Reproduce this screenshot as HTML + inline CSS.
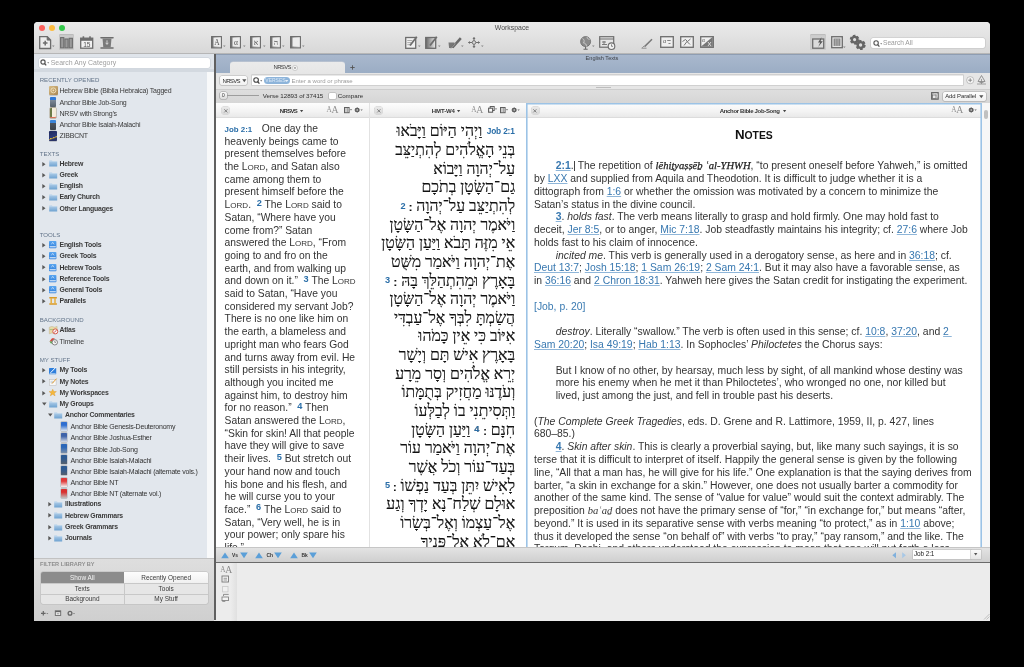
<!DOCTYPE html>
<html><head><meta charset="utf-8">
<style>
*{margin:0;padding:0;box-sizing:border-box}
html,body{width:1024px;height:667px;background:#000;overflow:hidden;font-family:"Liberation Sans",sans-serif;position:relative}
body{will-change:transform}
.a{position:absolute}
.t{position:absolute;white-space:nowrap;line-height:1}
svg{position:absolute;overflow:visible}
</style></head><body>

<div class="a" style="left:34.00px;top:22.00px;width:956.00px;height:598.50px;background:#ececec;border-radius:4px 4px 0 0"></div>
<div class="a" style="left:34.00px;top:22.00px;width:956.00px;height:32.00px;background:linear-gradient(#ebebeb,#d8d8d8);border-radius:4px 4px 0 0;border-bottom:1px solid #b6b6b6"></div>
<div class="a" style="left:38.50px;top:24.70px;width:6.40px;height:6.40px;background:#fc605b;border-radius:50%"></div>
<div class="a" style="left:48.50px;top:24.70px;width:6.40px;height:6.40px;background:#fdbc40;border-radius:50%"></div>
<div class="a" style="left:58.80px;top:24.70px;width:6.40px;height:6.40px;background:#34c84a;border-radius:50%"></div>
<div class="t" style="left:212.00px;width:600px;text-align:center;top:25.26px;font-size:6.9px;color:#4b4b4b;font-weight:normal;">Workspace</div>
<svg style="left:39.00px;top:35.80px" width="13" height="14" viewBox="0 0 13 14"><path d="M0.7 0.7h7.6l3.3 3.3v8.5H0.7z" fill="#ececec" stroke="#6d6d6d" stroke-width="1.3"/><path d="M8.2 0.7v3.4h3.4" fill="#6d6d6d" stroke="#6d6d6d" stroke-width="1"/><path d="M6.2 4.8v4.6M3.9 7.1h4.6" stroke="#6d6d6d" stroke-width="1.5"/></svg>
<svg style="left:51.60px;top:44.80px" width="3" height="3" viewBox="0 0 3 3"><path d="M0 0.4h2.6L1.3 2z" fill="#888"/></svg>
<div class="a" style="left:58.70px;top:34.30px;width:15.60px;height:15.30px;background:#cacaca;border-radius:1.5px;box-shadow:inset 0 0.6px 1px rgba(0,0,0,0.15)"></div>
<svg style="left:60.30px;top:37.20px" width="13" height="11.5" viewBox="0 0 13 11.5"><rect x="0.6" y="0.6" width="3.2" height="10.3" fill="#9a9a9a" stroke="#6d6d6d" stroke-width="1.1"/><rect x="4.9" y="2" width="3.2" height="8.9" fill="#9a9a9a" stroke="#6d6d6d" stroke-width="1.1"/><rect x="9.2" y="1.3" width="3.2" height="9.6" fill="#9a9a9a" stroke="#6d6d6d" stroke-width="1.1"/></svg>
<svg style="left:79.80px;top:36.20px" width="14" height="13" viewBox="0 0 14 13"><rect x="0.7" y="2.2" width="12" height="10" fill="#f2f2f2" stroke="#6d6d6d" stroke-width="1.3"/><rect x="0.7" y="2.2" width="12" height="2.6" fill="#6d6d6d"/><rect x="2.6" y="0.3" width="1.6" height="2.6" fill="#6d6d6d"/><rect x="9.2" y="0.3" width="1.6" height="2.6" fill="#6d6d6d"/><text x="6.8" y="11" font-family="Liberation Sans" font-size="6.6" text-anchor="middle" fill="#555">15</text></svg>
<svg style="left:98.50px;top:37.00px" width="16" height="12" viewBox="0 0 16 12"><path d="M2 0.8h12M2 11h12" stroke="#6d6d6d" stroke-width="1.6" stroke-linecap="round"/><path d="M3.5 1.5h9l-0.8 8.8h-7.4z" fill="#7a7a7a"/><path d="M8 3.3v4M6.6 5.8L8 7.3L9.4 5.8" stroke="#ddd" stroke-width="0.9" fill="none"/></svg>
<svg style="left:210.70px;top:36.10px" width="11" height="12.5" viewBox="0 0 11 12.5"><defs><linearGradient id="gb210" x1="0" x2="1"><stop offset="0" stop-color="#5f5f5f"/><stop offset="0.35" stop-color="#b9b9b9"/><stop offset="1" stop-color="#ededed"/></linearGradient></defs><rect x="0.6" y="0.6" width="9.8" height="11.3" fill="url(#gb210)" stroke="#6a6a6a" stroke-width="1.1"/><rect x="2.6" y="1.8" width="6.8" height="8.5" fill="#ececec"/><text x="6" y="9" font-family="Liberation Serif" font-size="7.5" text-anchor="middle" fill="#555">A</text></svg>
<svg style="left:223.10px;top:45.00px" width="3" height="3" viewBox="0 0 3 3"><path d="M0 0.4h2.6L1.3 2z" fill="#888"/></svg>
<svg style="left:230.40px;top:36.10px" width="11" height="12.5" viewBox="0 0 11 12.5"><defs><linearGradient id="gb230" x1="0" x2="1"><stop offset="0" stop-color="#5f5f5f"/><stop offset="0.35" stop-color="#b9b9b9"/><stop offset="1" stop-color="#ededed"/></linearGradient></defs><rect x="0.6" y="0.6" width="9.8" height="11.3" fill="url(#gb230)" stroke="#6a6a6a" stroke-width="1.1"/><rect x="2.6" y="1.8" width="6.8" height="8.5" fill="#ececec"/><text x="6" y="9" font-family="Liberation Serif" font-size="7.5" text-anchor="middle" fill="#555">α</text></svg>
<svg style="left:242.80px;top:45.00px" width="3" height="3" viewBox="0 0 3 3"><path d="M0 0.4h2.6L1.3 2z" fill="#888"/></svg>
<svg style="left:250.30px;top:36.10px" width="11" height="12.5" viewBox="0 0 11 12.5"><defs><linearGradient id="gb250" x1="0" x2="1"><stop offset="0" stop-color="#5f5f5f"/><stop offset="0.35" stop-color="#b9b9b9"/><stop offset="1" stop-color="#ededed"/></linearGradient></defs><rect x="0.6" y="0.6" width="9.8" height="11.3" fill="url(#gb250)" stroke="#6a6a6a" stroke-width="1.1"/><rect x="2.6" y="1.8" width="6.8" height="8.5" fill="#ececec"/><text x="6" y="9" font-family="Liberation Serif" font-size="7.5" text-anchor="middle" fill="#555">א</text></svg>
<svg style="left:262.70px;top:45.00px" width="3" height="3" viewBox="0 0 3 3"><path d="M0 0.4h2.6L1.3 2z" fill="#888"/></svg>
<svg style="left:270.00px;top:36.10px" width="11" height="12.5" viewBox="0 0 11 12.5"><defs><linearGradient id="gb270" x1="0" x2="1"><stop offset="0" stop-color="#5f5f5f"/><stop offset="0.35" stop-color="#b9b9b9"/><stop offset="1" stop-color="#ededed"/></linearGradient></defs><rect x="0.6" y="0.6" width="9.8" height="11.3" fill="url(#gb270)" stroke="#6a6a6a" stroke-width="1.1"/><rect x="2.6" y="1.8" width="6.8" height="8.5" fill="#ececec"/><text x="6" y="9" font-family="Liberation Serif" font-size="7.5" text-anchor="middle" fill="#555">ה</text></svg>
<svg style="left:282.40px;top:45.00px" width="3" height="3" viewBox="0 0 3 3"><path d="M0 0.4h2.6L1.3 2z" fill="#888"/></svg>
<svg style="left:290.00px;top:36.10px" width="11" height="12.5" viewBox="0 0 11 12.5"><defs><linearGradient id="gb290" x1="0" x2="1"><stop offset="0" stop-color="#5f5f5f"/><stop offset="0.35" stop-color="#b9b9b9"/><stop offset="1" stop-color="#ededed"/></linearGradient></defs><rect x="0.6" y="0.6" width="9.8" height="11.3" fill="url(#gb290)" stroke="#6a6a6a" stroke-width="1.1"/><rect x="2.6" y="1.8" width="6.8" height="8.5" fill="#ececec"/></svg>
<svg style="left:302.40px;top:45.00px" width="3" height="3" viewBox="0 0 3 3"><path d="M0 0.4h2.6L1.3 2z" fill="#888"/></svg>
<svg style="left:404.80px;top:36.00px" width="13" height="13" viewBox="0 0 13 13"><rect x="0.7" y="1.5" width="10" height="10.8" fill="#f0f0f0" stroke="#6d6d6d" stroke-width="1.3"/><path d="M2.3 4.5h5M2.3 6.6h4M2.3 8.7h4" stroke="#999" stroke-width="0.8"/><path d="M5 9.5L11.8 0.8" stroke="#6d6d6d" stroke-width="1.8"/></svg>
<svg style="left:418.20px;top:45.00px" width="3" height="3" viewBox="0 0 3 3"><path d="M0 0.4h2.6L1.3 2z" fill="#888"/></svg>
<svg style="left:425.00px;top:36.00px" width="13" height="13" viewBox="0 0 13 13"><defs><linearGradient id="g3" x1="0" x2="1"><stop offset="0" stop-color="#666"/><stop offset="1" stop-color="#efefef"/></linearGradient></defs><rect x="0.7" y="1.5" width="10" height="10.8" fill="url(#g3)" stroke="#6d6d6d" stroke-width="1.3"/><path d="M5 9.5L11.8 0.8" stroke="#6d6d6d" stroke-width="1.8"/></svg>
<svg style="left:438.00px;top:45.00px" width="3" height="3" viewBox="0 0 3 3"><path d="M0 0.4h2.6L1.3 2z" fill="#888"/></svg>
<svg style="left:447.90px;top:36.50px" width="14" height="12.5" viewBox="0 0 14 12.5"><path d="M0.5 5.5h6l-0.8 5.5h-4.6z" fill="#777"/><path d="M4.5 10.5L12.8 1.2" stroke="#6a6a6a" stroke-width="2.6"/><path d="M3 11.5L7.5 6.5" stroke="#999" stroke-width="1"/></svg>
<svg style="left:461.20px;top:45.00px" width="3" height="3" viewBox="0 0 3 3"><path d="M0 0.4h2.6L1.3 2z" fill="#888"/></svg>
<svg style="left:468.00px;top:36.80px" width="12" height="11" viewBox="0 0 12 11"><path d="M6 0.3v10.4M0.3 5.5h11.4" stroke="#6d6d6d" stroke-width="1.1"/><path d="M6 0.2L4.4 2h3.2zM6 10.8L4.4 9h3.2zM0.2 5.5L2 3.9v3.2zM11.8 5.5L10 3.9v3.2z" fill="#6d6d6d"/><circle cx="6" cy="5.5" r="1.8" fill="#d8d8d8" stroke="#6d6d6d" stroke-width="0.9"/></svg>
<svg style="left:481.00px;top:45.00px" width="3" height="3" viewBox="0 0 3 3"><path d="M0 0.4h2.6L1.3 2z" fill="#888"/></svg>
<svg style="left:580.00px;top:35.50px" width="12" height="14" viewBox="0 0 12 14"><circle cx="5.6" cy="5.6" r="5" fill="#8a8a8a" stroke="#6a6a6a" stroke-width="0.8"/><path d="M2.5 2.5c2 1 2 3 1 4.5c2 0 3 1.5 3 3.5M7 1c0 2 2 2.5 3.5 2" stroke="#c9c9c9" stroke-width="1" fill="none"/><path d="M5.6 10.6v2.5M3.5 13.2h4.2" stroke="#6a6a6a" stroke-width="1.1"/></svg>
<svg style="left:592.40px;top:45.00px" width="3" height="3" viewBox="0 0 3 3"><path d="M0 0.4h2.6L1.3 2z" fill="#888"/></svg>
<svg style="left:599.00px;top:36.00px" width="17" height="14" viewBox="0 0 17 14"><rect x="0.7" y="0.7" width="14" height="10.5" fill="#e6e6e6" stroke="#6d6d6d" stroke-width="1.2"/><path d="M0.7 3h14" stroke="#6d6d6d" stroke-width="1"/><path d="M3 6h4M5 5v3M3 8.5h5" stroke="#6d6d6d" stroke-width="0.9"/><circle cx="12.5" cy="10.2" r="3.3" fill="#f2f2f2" stroke="#6d6d6d" stroke-width="1.1"/><path d="M12.5 8.3v2h1.5" stroke="#6d6d6d" stroke-width="0.8" fill="none"/></svg>
<svg style="left:640.90px;top:38.00px" width="12" height="10.5" viewBox="0 0 12 10.5"><path d="M3 8L10.5 0.8l1 1L4 9.2z" fill="#777"/><path d="M3 8l-1.8 1.8M0.5 10.2h5" stroke="#888" stroke-width="0.9"/></svg>
<svg style="left:659.70px;top:36.20px" width="14.5" height="12.2" viewBox="0 0 14.5 12.2"><rect x="0.7" y="0.7" width="12.6" height="10.6" fill="#efefef" stroke="#6d6d6d" stroke-width="1.3"/><text x="3" y="6.8" font-family="Liberation Serif" font-size="6" fill="#555">α</text><path d="M7.2 4.5h3.5M8.5 7.5h2" stroke="#777" stroke-width="0.9"/></svg>
<svg style="left:679.80px;top:36.20px" width="14.5" height="12.2" viewBox="0 0 14.5 12.2"><rect x="0.7" y="0.7" width="12.6" height="10.6" fill="#efefef" stroke="#6d6d6d" stroke-width="1.3"/><path d="M2.5 5.5l3 -2l2 2l3 -2.5M4 9.5l3-4l3 3" stroke="#666" stroke-width="0.9" fill="none"/></svg>
<svg style="left:699.60px;top:36.20px" width="14.5" height="12.2" viewBox="0 0 14.5 12.2"><rect x="0.7" y="0.7" width="12.6" height="10.6" fill="#efefef" stroke="#6d6d6d" stroke-width="1.3"/><path d="M0.8 10.8L12.8 0.8V10.8z" fill="#777"/><text x="2" y="6" font-family="Liberation Serif" font-size="5.5" fill="#555">α</text><path d="M8 6l3 4M11 6l-3 4" stroke="#e5e5e5" stroke-width="0.9"/></svg>
<div class="a" style="left:810.10px;top:34.40px;width:15.70px;height:15.40px;background:#cdcdcd;border-radius:1.5px;box-shadow:inset 0 0.6px 1px rgba(0,0,0,0.15)"></div>
<svg style="left:811.80px;top:36.70px" width="13" height="12" viewBox="0 0 13 12"><rect x="0.7" y="2" width="11" height="9.2" fill="#dadada" stroke="#6d6d6d" stroke-width="1.3"/><path d="M9.5 0.3L6 5.5h2.2L6.2 10L10.8 4.3H8.6z" fill="#555"/></svg>
<svg style="left:830.60px;top:36.40px" width="12" height="12.5" viewBox="0 0 12 12.5"><rect x="0.7" y="0.7" width="10.6" height="11" fill="#e3e3e3" stroke="#6d6d6d" stroke-width="1.3"/><rect x="2.6" y="2.5" width="6.8" height="7.4" fill="#8a8a8a"/><path d="M4.8 2.5v7.4M7.1 2.5v7.4" stroke="#c5c5c5" stroke-width="0.7"/></svg>
<svg style="left:843.00px;top:45.50px" width="3" height="3" viewBox="0 0 3 3"><path d="M0 0.4h2.6L1.3 2z" fill="#888"/></svg>
<svg style="left:849.80px;top:35.00px" width="16" height="15" viewBox="0 0 16 15"><circle cx="4.6" cy="4.6" r="3.8" fill="none" stroke="#666" stroke-width="2.09" stroke-dasharray="2.36 1.60"/><circle cx="4.6" cy="4.6" r="2.74" fill="none" stroke="#666" stroke-width="2.28"/><circle cx="10.6" cy="10" r="4.0" fill="none" stroke="#666" stroke-width="2.20" stroke-dasharray="2.48 1.68"/><circle cx="10.6" cy="10" r="2.88" fill="none" stroke="#666" stroke-width="2.40"/></svg>
<div class="a" style="left:870.60px;top:37.90px;width:114.20px;height:10.20px;background:#fff;border-radius:2px;box-shadow:0 0 0 0.6px #c3c3c3"></div>
<svg style="left:872.50px;top:39.50px" width="10" height="8" viewBox="0 0 10 8"><circle cx="3.1" cy="3" r="2.2" fill="none" stroke="#555" stroke-width="1.1"/><line x1="4.7" y1="4.6" x2="6.4" y2="6.6" stroke="#555" stroke-width="1.3"/><path d="M7.2 3.3h2l-1 1.1z" fill="#666"/></svg>
<div class="t" style="left:883.00px;top:40.10px;font-size:6.6px;color:#9a9a9a;font-weight:normal;">Search All</div>
<div class="a" style="left:34.00px;top:54.00px;width:181.00px;height:504.00px;background:#e2e7ed"></div>
<div class="a" style="left:34.00px;top:54.00px;width:181.00px;height:17.50px;background:#dfe4ea;border-bottom:3px solid #d3d9e0"></div>
<div class="a" style="left:38.50px;top:57.60px;width:171.50px;height:10.40px;background:#fff;border-radius:2px;box-shadow:0 0 0 0.5px #c6ccd3"></div>
<svg style="left:40px;top:59px" width="10" height="8"><circle cx="3" cy="3" r="2.1" fill="none" stroke="#555" stroke-width="1.2"/><line x1="4.5" y1="4.5" x2="6.2" y2="6.4" stroke="#555" stroke-width="1.3"/><path d="M7.2 3.3h2l-1 1.1z" fill="#666"/></svg>
<div class="t" style="left:50.70px;top:59.84px;font-size:6.95px;color:#a0a0a0;font-weight:normal;">Search Any Category</div>
<div class="a" style="left:206.70px;top:71.50px;width:7.50px;height:486.50px;background:#f8f9fa"></div>
<div class="a" style="left:214.20px;top:54.00px;width:1.80px;height:566.00px;background:#606060"></div>
<div class="t" style="left:39.70px;top:76.92px;font-size:6.1px;color:#627489;font-weight:normal;letter-spacing:0.02px">RECENTLY OPENED</div>
<div class="a" style="left:48.80px;top:86.10px;width:8.80px;height:9.40px;background:linear-gradient(135deg,#d8bd86,#a98652);border-radius:1px;box-shadow:0 0.5px 0.5px rgba(0,0,0,0.3)"></div>
<svg style="left:49.8px;top:87.4px" width="7" height="7"><circle cx="3.4" cy="3.4" r="2.5" fill="none" stroke="#f0e2bf" stroke-width="0.9"/><circle cx="3.4" cy="3.4" r="0.9" fill="#efe0bb"/></svg>
<div class="t" style="left:59.50px;top:87.22px;font-size:7.0px;color:#3a3a3a;font-weight:normal;letter-spacing:-0.22px">Hebrew Bible (Biblia Hebraica) Tagged</div>
<div class="a" style="left:49.70px;top:97.00px;width:6.70px;height:9.80px;background:linear-gradient(#2f78d6 0,#2f78d6 30%,#7d8a99 30%,#56606b);border-radius:0.8px;box-shadow:0 0.5px 0.5px rgba(0,0,0,0.3)"></div>
<div class="t" style="left:59.50px;top:98.52px;font-size:7.0px;color:#3a3a3a;font-weight:normal;letter-spacing:-0.22px">Anchor Bible Job-Song</div>
<div class="a" style="left:49.70px;top:108.30px;width:6.70px;height:10.00px;background:linear-gradient(90deg,#6b7a46 0,#6b7a46 25%,#f6f0e2 25%,#f3ead6);border-radius:0.8px;box-shadow:0 0 0 0.4px #9a8a6a, 0 -1px 0 #d9735a inset"></div>
<div class="t" style="left:59.50px;top:109.72px;font-size:7.0px;color:#3a3a3a;font-weight:normal;letter-spacing:-0.22px">NRSV with Strong’s</div>
<div class="a" style="left:49.70px;top:119.70px;width:6.70px;height:10.00px;background:linear-gradient(#3a84d8 0,#3a84d8 28%,#4d5560 28%,#39414b);border-radius:0.8px;box-shadow:0 0.5px 0.5px rgba(0,0,0,0.3)"></div>
<div class="t" style="left:59.50px;top:120.92px;font-size:7.0px;color:#3a3a3a;font-weight:normal;letter-spacing:-0.22px">Anchor Bible Isaiah-Malachi</div>
<div class="a" style="left:49.30px;top:131.00px;width:7.70px;height:9.60px;background:linear-gradient(160deg,#1f2a5e,#2c3a7a 60%,#d9b43a 62%,#2a3468 75%);border-radius:0.8px;box-shadow:0 0.5px 0.5px rgba(0,0,0,0.3)"></div>
<div class="t" style="left:59.50px;top:132.12px;font-size:7.0px;color:#3a3a3a;font-weight:normal;letter-spacing:-0.22px">ZIBBCNT</div>
<div class="t" style="left:39.70px;top:150.82px;font-size:6.1px;color:#627489;font-weight:normal;letter-spacing:0.02px">TEXTS</div>
<svg style="left:42.4px;top:161.5px" width="4" height="5"><path d="M0.3 0V4.6L3.5 2.3z" fill="#585858"/></svg>
<svg style="left:48.8px;top:160.4px" width="9" height="7"><defs><linearGradient id="fg" x1="0" y1="0" x2="0" y2="1"><stop offset="0" stop-color="#b3d0ea"/><stop offset="1" stop-color="#6fa3d1"/></linearGradient></defs><path d="M0.2 0.6h2.8l0.6 0.6h4.6v5.2h-8z" fill="url(#fg)"/><path d="M0.2 1.6h8" stroke="#c9def1" stroke-width="0.5"/></svg>
<div class="t" style="left:59.50px;top:160.76px;font-size:6.9px;color:#3a3a3a;font-weight:bold;letter-spacing:-0.22px">Hebrew</div>
<svg style="left:42.4px;top:172.7px" width="4" height="5"><path d="M0.3 0V4.6L3.5 2.3z" fill="#585858"/></svg>
<svg style="left:48.8px;top:171.6px" width="9" height="7"><defs><linearGradient id="fg" x1="0" y1="0" x2="0" y2="1"><stop offset="0" stop-color="#b3d0ea"/><stop offset="1" stop-color="#6fa3d1"/></linearGradient></defs><path d="M0.2 0.6h2.8l0.6 0.6h4.6v5.2h-8z" fill="url(#fg)"/><path d="M0.2 1.6h8" stroke="#c9def1" stroke-width="0.5"/></svg>
<div class="t" style="left:59.50px;top:171.96px;font-size:6.9px;color:#3a3a3a;font-weight:bold;letter-spacing:-0.22px">Greek</div>
<svg style="left:42.4px;top:183.9px" width="4" height="5"><path d="M0.3 0V4.6L3.5 2.3z" fill="#585858"/></svg>
<svg style="left:48.8px;top:182.8px" width="9" height="7"><defs><linearGradient id="fg" x1="0" y1="0" x2="0" y2="1"><stop offset="0" stop-color="#b3d0ea"/><stop offset="1" stop-color="#6fa3d1"/></linearGradient></defs><path d="M0.2 0.6h2.8l0.6 0.6h4.6v5.2h-8z" fill="url(#fg)"/><path d="M0.2 1.6h8" stroke="#c9def1" stroke-width="0.5"/></svg>
<div class="t" style="left:59.50px;top:183.16px;font-size:6.9px;color:#3a3a3a;font-weight:bold;letter-spacing:-0.22px">English</div>
<svg style="left:42.4px;top:195.1px" width="4" height="5"><path d="M0.3 0V4.6L3.5 2.3z" fill="#585858"/></svg>
<svg style="left:48.8px;top:194.0px" width="9" height="7"><defs><linearGradient id="fg" x1="0" y1="0" x2="0" y2="1"><stop offset="0" stop-color="#b3d0ea"/><stop offset="1" stop-color="#6fa3d1"/></linearGradient></defs><path d="M0.2 0.6h2.8l0.6 0.6h4.6v5.2h-8z" fill="url(#fg)"/><path d="M0.2 1.6h8" stroke="#c9def1" stroke-width="0.5"/></svg>
<div class="t" style="left:59.50px;top:194.36px;font-size:6.9px;color:#3a3a3a;font-weight:bold;letter-spacing:-0.22px">Early Church</div>
<svg style="left:42.4px;top:206.3px" width="4" height="5"><path d="M0.3 0V4.6L3.5 2.3z" fill="#585858"/></svg>
<svg style="left:48.8px;top:205.2px" width="9" height="7"><defs><linearGradient id="fg" x1="0" y1="0" x2="0" y2="1"><stop offset="0" stop-color="#b3d0ea"/><stop offset="1" stop-color="#6fa3d1"/></linearGradient></defs><path d="M0.2 0.6h2.8l0.6 0.6h4.6v5.2h-8z" fill="url(#fg)"/><path d="M0.2 1.6h8" stroke="#c9def1" stroke-width="0.5"/></svg>
<div class="t" style="left:59.50px;top:205.56px;font-size:6.9px;color:#3a3a3a;font-weight:bold;letter-spacing:-0.22px">Other Languages</div>
<div class="t" style="left:39.70px;top:231.82px;font-size:6.1px;color:#627489;font-weight:normal;letter-spacing:0.02px">TOOLS</div>
<svg style="left:42.4px;top:242.9px" width="4" height="5"><path d="M0.3 0V4.6L3.5 2.3z" fill="#585858"/></svg>
<svg style="left:49.2px;top:241.2px" width="8" height="8"><defs><linearGradient id="tg" x1="0" y1="0" x2="0" y2="1"><stop offset="0" stop-color="#5aa6f0"/><stop offset="1" stop-color="#2f7fdc"/></linearGradient></defs><rect x="0" y="0" width="7.4" height="7.3" rx="0.8" fill="url(#tg)"/><rect x="0.6" y="5.3" width="6.2" height="1" fill="#f4f8fc"/><path d="M2.3 3.4L3.7 1.3L5.1 3.4" stroke="#e8f2fc" stroke-width="0.6" fill="none"/></svg>
<div class="t" style="left:59.50px;top:242.16px;font-size:6.9px;color:#3a3a3a;font-weight:bold;letter-spacing:-0.22px">English Tools</div>
<svg style="left:42.4px;top:254.1px" width="4" height="5"><path d="M0.3 0V4.6L3.5 2.3z" fill="#585858"/></svg>
<svg style="left:49.2px;top:252.4px" width="8" height="8"><defs><linearGradient id="tg" x1="0" y1="0" x2="0" y2="1"><stop offset="0" stop-color="#5aa6f0"/><stop offset="1" stop-color="#2f7fdc"/></linearGradient></defs><rect x="0" y="0" width="7.4" height="7.3" rx="0.8" fill="url(#tg)"/><rect x="0.6" y="5.3" width="6.2" height="1" fill="#f4f8fc"/><path d="M2.3 3.4L3.7 1.3L5.1 3.4" stroke="#e8f2fc" stroke-width="0.6" fill="none"/></svg>
<div class="t" style="left:59.50px;top:253.36px;font-size:6.9px;color:#3a3a3a;font-weight:bold;letter-spacing:-0.22px">Greek Tools</div>
<svg style="left:42.4px;top:265.3px" width="4" height="5"><path d="M0.3 0V4.6L3.5 2.3z" fill="#585858"/></svg>
<svg style="left:49.2px;top:263.6px" width="8" height="8"><defs><linearGradient id="tg" x1="0" y1="0" x2="0" y2="1"><stop offset="0" stop-color="#5aa6f0"/><stop offset="1" stop-color="#2f7fdc"/></linearGradient></defs><rect x="0" y="0" width="7.4" height="7.3" rx="0.8" fill="url(#tg)"/><rect x="0.6" y="5.3" width="6.2" height="1" fill="#f4f8fc"/><path d="M2.3 3.4L3.7 1.3L5.1 3.4" stroke="#e8f2fc" stroke-width="0.6" fill="none"/></svg>
<div class="t" style="left:59.50px;top:264.56px;font-size:6.9px;color:#3a3a3a;font-weight:bold;letter-spacing:-0.22px">Hebrew Tools</div>
<svg style="left:42.4px;top:276.5px" width="4" height="5"><path d="M0.3 0V4.6L3.5 2.3z" fill="#585858"/></svg>
<svg style="left:49.2px;top:274.8px" width="8" height="8"><defs><linearGradient id="tg" x1="0" y1="0" x2="0" y2="1"><stop offset="0" stop-color="#5aa6f0"/><stop offset="1" stop-color="#2f7fdc"/></linearGradient></defs><rect x="0" y="0" width="7.4" height="7.3" rx="0.8" fill="url(#tg)"/><rect x="0.6" y="5.3" width="6.2" height="1" fill="#f4f8fc"/><path d="M2.3 3.4L3.7 1.3L5.1 3.4" stroke="#e8f2fc" stroke-width="0.6" fill="none"/></svg>
<div class="t" style="left:59.50px;top:275.76px;font-size:6.9px;color:#3a3a3a;font-weight:bold;letter-spacing:-0.22px">Reference Tools</div>
<svg style="left:42.4px;top:287.7px" width="4" height="5"><path d="M0.3 0V4.6L3.5 2.3z" fill="#585858"/></svg>
<svg style="left:49.2px;top:286.0px" width="8" height="8"><defs><linearGradient id="tg" x1="0" y1="0" x2="0" y2="1"><stop offset="0" stop-color="#5aa6f0"/><stop offset="1" stop-color="#2f7fdc"/></linearGradient></defs><rect x="0" y="0" width="7.4" height="7.3" rx="0.8" fill="url(#tg)"/><rect x="0.6" y="5.3" width="6.2" height="1" fill="#f4f8fc"/><path d="M2.3 3.4L3.7 1.3L5.1 3.4" stroke="#e8f2fc" stroke-width="0.6" fill="none"/></svg>
<div class="t" style="left:59.50px;top:286.96px;font-size:6.9px;color:#3a3a3a;font-weight:bold;letter-spacing:-0.22px">General Tools</div>
<svg style="left:42.4px;top:298.9px" width="4" height="5"><path d="M0.3 0V4.6L3.5 2.3z" fill="#585858"/></svg>
<svg style="left:49px;top:297.2px" width="9" height="8"><path d="M0.3 0.8h7.6M0.3 7h7.6" stroke="#d79a2a" stroke-width="1.4"/><path d="M2.2 1v6M6 1v6" stroke="#e6b040" stroke-width="1.5"/></svg>
<div class="t" style="left:59.50px;top:298.16px;font-size:6.9px;color:#3a3a3a;font-weight:bold;letter-spacing:-0.22px">Parallels</div>
<div class="t" style="left:39.70px;top:316.92px;font-size:6.1px;color:#627489;font-weight:normal;letter-spacing:0.02px">BACKGROUND</div>
<svg style="left:42.4px;top:328.0px" width="4" height="5"><path d="M0.3 0V4.6L3.5 2.3z" fill="#585858"/></svg>
<svg style="left:48.8px;top:326.0px" width="10" height="9"><path d="M0.3 1.2l2.6-0.8l2.6 0.8l2.6-0.8v6.6l-2.6 0.8l-2.6-0.8l-2.6 0.8z" fill="#e8d9a8" stroke="#b9a878" stroke-width="0.4"/><path d="M0.8 3.5c1.5 0.5 2.5-0.5 4 0.4" stroke="#8fb86a" stroke-width="0.8" fill="none"/><circle cx="6.3" cy="5.4" r="2.5" fill="#f7f7f7" stroke="#d23a2a" stroke-width="0.8"/><path d="M5.2 6.6L7.4 4.2" stroke="#c22" stroke-width="0.8"/></svg>
<div class="t" style="left:59.50px;top:327.26px;font-size:6.9px;color:#3a3a3a;font-weight:bold;letter-spacing:-0.22px">Atlas</div>
<svg style="left:48.8px;top:337.1px" width="10" height="9"><path d="M0.5 4.5L3 1.2h2.8L3.5 4.5z" fill="#d8473a"/><path d="M0.5 4.5h3l-1.2 2.5z" fill="#5aa84a"/><circle cx="5.8" cy="5.3" r="2.7" fill="#f4f4f4" stroke="#6a6a6a" stroke-width="0.8"/><path d="M5.8 3.8v1.6h1.2" stroke="#555" stroke-width="0.6" fill="none"/></svg>
<div class="t" style="left:59.50px;top:338.32px;font-size:7.0px;color:#3a3a3a;font-weight:normal;letter-spacing:-0.22px">Timeline</div>
<div class="t" style="left:39.70px;top:357.32px;font-size:6.1px;color:#627489;font-weight:normal;letter-spacing:0.02px">MY STUFF</div>
<svg style="left:42.4px;top:368.1px" width="4" height="5"><path d="M0.3 0V4.6L3.5 2.3z" fill="#585858"/></svg>
<svg style="left:49px;top:366.6px" width="9" height="8"><rect x="0" y="1" width="7.2" height="6.2" fill="#2f7fdc" rx="0.5"/><path d="M1.5 5.8L6.8 0.4" stroke="#fff" stroke-width="1"/><path d="M0.5 6.6h6.2" stroke="#cfe2f7" stroke-width="0.7"/></svg>
<div class="t" style="left:59.50px;top:367.36px;font-size:6.9px;color:#3a3a3a;font-weight:bold;letter-spacing:-0.22px">My Tools</div>
<svg style="left:42.4px;top:379.3px" width="4" height="5"><path d="M0.3 0V4.6L3.5 2.3z" fill="#585858"/></svg>
<svg style="left:49px;top:377.8px" width="9" height="8"><rect x="0.3" y="1.6" width="6.8" height="5.6" fill="#fafafa" stroke="#b5b5b5" stroke-width="0.5"/><path d="M1.5 3.3h3M1.5 4.6h3" stroke="#9ab" stroke-width="0.5"/><path d="M3 5.6L7.6 0.6" stroke="#e39b2c" stroke-width="1"/></svg>
<div class="t" style="left:59.50px;top:378.56px;font-size:6.9px;color:#3a3a3a;font-weight:bold;letter-spacing:-0.22px">My Notes</div>
<svg style="left:42.4px;top:390.5px" width="4" height="5"><path d="M0.3 0V4.6L3.5 2.3z" fill="#585858"/></svg>
<svg style="left:49.3px;top:388.8px" width="8" height="8"><path d="M3.7 0.2L4.8 2.6H7.4L5.3 4.2L6.1 6.9L3.7 5.3L1.3 6.9L2.1 4.2L0 2.6H2.6z" fill="#f5b83d" stroke="#d9901f" stroke-width="0.35"/></svg>
<div class="t" style="left:59.50px;top:389.76px;font-size:6.9px;color:#3a3a3a;font-weight:bold;letter-spacing:-0.22px">My Workspaces</div>
<svg style="left:41.9px;top:402.0px" width="5" height="4"><path d="M0 0.5H4.6L2.3 3.6z" fill="#585858"/></svg>
<svg style="left:48.8px;top:400.6px" width="9" height="7"><defs><linearGradient id="fg" x1="0" y1="0" x2="0" y2="1"><stop offset="0" stop-color="#b3d0ea"/><stop offset="1" stop-color="#6fa3d1"/></linearGradient></defs><path d="M0.2 0.6h2.8l0.6 0.6h4.6v5.2h-8z" fill="url(#fg)"/><path d="M0.2 1.6h8" stroke="#c9def1" stroke-width="0.5"/></svg>
<div class="t" style="left:59.50px;top:400.96px;font-size:6.9px;color:#3a3a3a;font-weight:bold;letter-spacing:-0.22px">My Groups</div>
<svg style="left:47.9px;top:413.2px" width="5" height="4"><path d="M0 0.5H4.6L2.3 3.6z" fill="#585858"/></svg>
<svg style="left:54.3px;top:411.8px" width="9" height="7"><defs><linearGradient id="fg" x1="0" y1="0" x2="0" y2="1"><stop offset="0" stop-color="#b3d0ea"/><stop offset="1" stop-color="#6fa3d1"/></linearGradient></defs><path d="M0.2 0.6h2.8l0.6 0.6h4.6v5.2h-8z" fill="url(#fg)"/><path d="M0.2 1.6h8" stroke="#c9def1" stroke-width="0.5"/></svg>
<div class="t" style="left:65.00px;top:412.16px;font-size:6.9px;color:#3a3a3a;font-weight:bold;letter-spacing:-0.22px">Anchor Commentaries</div>
<div class="a" style="left:60.80px;top:421.80px;width:6.50px;height:9.00px;background:linear-gradient(#2f6fd0 35%,#dfe6ef);border-radius:0.5px;box-shadow:0 0 0 0.4px rgba(0,0,0,0.3)"></div>
<div class="t" style="left:70.60px;top:423.22px;font-size:7.0px;color:#333;font-weight:normal;letter-spacing:-0.22px">Anchor Bible Genesis-Deuteronomy</div>
<div class="a" style="left:60.80px;top:432.95px;width:6.50px;height:9.00px;background:linear-gradient(#3e62a8 35%,#d5dbe6);border-radius:0.5px;box-shadow:0 0 0 0.4px rgba(0,0,0,0.3)"></div>
<div class="t" style="left:70.60px;top:434.37px;font-size:7.0px;color:#333;font-weight:normal;letter-spacing:-0.22px">Anchor Bible Joshua-Esther</div>
<div class="a" style="left:60.80px;top:444.10px;width:6.50px;height:9.00px;background:linear-gradient(#2a66b8 35%,#7b8fa8);border-radius:0.5px;box-shadow:0 0 0 0.4px rgba(0,0,0,0.3)"></div>
<div class="t" style="left:70.60px;top:445.52px;font-size:7.0px;color:#333;font-weight:normal;letter-spacing:-0.22px">Anchor Bible Job-Song</div>
<div class="a" style="left:60.80px;top:455.25px;width:6.50px;height:9.00px;background:linear-gradient(#2d5a92 35%,#56616e);border-radius:0.5px;box-shadow:0 0 0 0.4px rgba(0,0,0,0.3)"></div>
<div class="t" style="left:70.60px;top:456.67px;font-size:7.0px;color:#333;font-weight:normal;letter-spacing:-0.22px">Anchor Bible Isaiah-Malachi</div>
<div class="a" style="left:60.80px;top:466.40px;width:6.50px;height:9.00px;background:linear-gradient(#2d5a92 35%,#56616e);border-radius:0.5px;box-shadow:0 0 0 0.4px rgba(0,0,0,0.3)"></div>
<div class="t" style="left:70.60px;top:467.82px;font-size:7.0px;color:#333;font-weight:normal;letter-spacing:-0.22px">Anchor Bible Isaiah-Malachi (alternate vols.)</div>
<div class="a" style="left:60.80px;top:477.55px;width:6.50px;height:9.00px;background:linear-gradient(#e03a3a 35%,#f5f5f5);border-radius:0.5px;box-shadow:0 0 0 0.4px rgba(0,0,0,0.3)"></div>
<div class="t" style="left:70.60px;top:478.97px;font-size:7.0px;color:#333;font-weight:normal;letter-spacing:-0.22px">Anchor Bible NT</div>
<div class="a" style="left:60.80px;top:488.70px;width:6.50px;height:9.00px;background:linear-gradient(#d93030 35%,#bfbfbf);border-radius:0.5px;box-shadow:0 0 0 0.4px rgba(0,0,0,0.3)"></div>
<div class="t" style="left:70.60px;top:490.12px;font-size:7.0px;color:#333;font-weight:normal;letter-spacing:-0.22px">Anchor Bible NT (alternate vol.)</div>
<svg style="left:47.8px;top:502.2px" width="4" height="5"><path d="M0.3 0V4.6L3.5 2.3z" fill="#585858"/></svg>
<svg style="left:54.3px;top:501.1px" width="9" height="7"><defs><linearGradient id="fg" x1="0" y1="0" x2="0" y2="1"><stop offset="0" stop-color="#b3d0ea"/><stop offset="1" stop-color="#6fa3d1"/></linearGradient></defs><path d="M0.2 0.6h2.8l0.6 0.6h4.6v5.2h-8z" fill="url(#fg)"/><path d="M0.2 1.6h8" stroke="#c9def1" stroke-width="0.5"/></svg>
<div class="t" style="left:65.00px;top:501.46px;font-size:6.9px;color:#3a3a3a;font-weight:bold;letter-spacing:-0.22px">Illustrations</div>
<svg style="left:47.8px;top:513.4px" width="4" height="5"><path d="M0.3 0V4.6L3.5 2.3z" fill="#585858"/></svg>
<svg style="left:54.3px;top:512.3px" width="9" height="7"><defs><linearGradient id="fg" x1="0" y1="0" x2="0" y2="1"><stop offset="0" stop-color="#b3d0ea"/><stop offset="1" stop-color="#6fa3d1"/></linearGradient></defs><path d="M0.2 0.6h2.8l0.6 0.6h4.6v5.2h-8z" fill="url(#fg)"/><path d="M0.2 1.6h8" stroke="#c9def1" stroke-width="0.5"/></svg>
<div class="t" style="left:65.00px;top:512.66px;font-size:6.9px;color:#3a3a3a;font-weight:bold;letter-spacing:-0.22px">Hebrew Grammars</div>
<svg style="left:47.8px;top:524.6px" width="4" height="5"><path d="M0.3 0V4.6L3.5 2.3z" fill="#585858"/></svg>
<svg style="left:54.3px;top:523.5px" width="9" height="7"><defs><linearGradient id="fg" x1="0" y1="0" x2="0" y2="1"><stop offset="0" stop-color="#b3d0ea"/><stop offset="1" stop-color="#6fa3d1"/></linearGradient></defs><path d="M0.2 0.6h2.8l0.6 0.6h4.6v5.2h-8z" fill="url(#fg)"/><path d="M0.2 1.6h8" stroke="#c9def1" stroke-width="0.5"/></svg>
<div class="t" style="left:65.00px;top:523.86px;font-size:6.9px;color:#3a3a3a;font-weight:bold;letter-spacing:-0.22px">Greek Grammars</div>
<svg style="left:47.8px;top:535.8px" width="4" height="5"><path d="M0.3 0V4.6L3.5 2.3z" fill="#585858"/></svg>
<svg style="left:54.3px;top:534.7px" width="9" height="7"><defs><linearGradient id="fg" x1="0" y1="0" x2="0" y2="1"><stop offset="0" stop-color="#b3d0ea"/><stop offset="1" stop-color="#6fa3d1"/></linearGradient></defs><path d="M0.2 0.6h2.8l0.6 0.6h4.6v5.2h-8z" fill="url(#fg)"/><path d="M0.2 1.6h8" stroke="#c9def1" stroke-width="0.5"/></svg>
<div class="t" style="left:65.00px;top:535.06px;font-size:6.9px;color:#3a3a3a;font-weight:bold;letter-spacing:-0.22px">Journals</div>
<div class="a" style="left:34.00px;top:558.00px;width:180.20px;height:62.50px;background:linear-gradient(#dedede,#cfcfcf);border-top:1px solid #c2c2c2"></div>
<div class="t" style="left:40.00px;top:562.14px;font-size:5.6px;color:#8f8f8f;font-weight:bold;">FILTER LIBRARY BY</div>
<div class="a" style="left:40.50px;top:572.40px;width:167.50px;height:31.80px;background:#e6e6e6;box-shadow:0 0 0 0.5px #b9b9b9;border-radius:2px"></div>
<div class="a" style="left:40.50px;top:572.40px;width:83.70px;height:10.60px;background:#8c8c8c;border-radius:2px 0 0 0"></div>
<div class="a" style="left:124.20px;top:572.40px;width:83.80px;height:10.60px;background:linear-gradient(#fdfdfd,#f0f0f0);border-radius:0 2px 0 0"></div>
<div class="a" style="left:40.50px;top:583.00px;width:167.50px;height:0.60px;background:#c8c8c8"></div>
<div class="a" style="left:40.50px;top:593.70px;width:167.50px;height:0.60px;background:#c8c8c8"></div>
<div class="a" style="left:124.00px;top:583.00px;width:0.60px;height:21.20px;background:#c8c8c8"></div>
<div class="t" style="left:-217.70px;width:600px;text-align:center;top:574.86px;font-size:6.45px;color:#f4f4f4;font-weight:normal;">Show All</div>
<div class="t" style="left:-133.90px;width:600px;text-align:center;top:574.86px;font-size:6.45px;color:#3a3a3a;font-weight:normal;">Recently Opened</div>
<div class="t" style="left:-217.70px;width:600px;text-align:center;top:585.66px;font-size:6.45px;color:#3a3a3a;font-weight:normal;">Texts</div>
<div class="t" style="left:-133.90px;width:600px;text-align:center;top:585.66px;font-size:6.45px;color:#3a3a3a;font-weight:normal;">Tools</div>
<div class="t" style="left:-217.70px;width:600px;text-align:center;top:596.16px;font-size:6.45px;color:#3a3a3a;font-weight:normal;">Background</div>
<div class="t" style="left:-133.90px;width:600px;text-align:center;top:596.16px;font-size:6.45px;color:#3a3a3a;font-weight:normal;">My Stuff</div>
<svg style="left:40px;top:610px" width="40" height="7"><path d="M1 3.3h4.6M3.3 1v4.6" stroke="#666" stroke-width="1.2"/><path d="M6.3 3h2l-1 1.2z" fill="#777"/><rect x="15.3" y="0.8" width="5.4" height="4.6" fill="#eee" stroke="#666" stroke-width="0.9"/><path d="M15.3 1.6h5.4" stroke="#666" stroke-width="1.2"/><path d="M17 3.2l1 1l1-1" stroke="#666" stroke-width="0.7" fill="none"/><circle cx="30" cy="3.2" r="1.9" fill="none" stroke="#666" stroke-width="1.3"/><path d="M33 3h2l-1 1.2z" fill="#777"/></svg>
<div class="a" style="left:216.00px;top:54.00px;width:774.00px;height:566.00px;background:#ececec"></div>
<div class="a" style="left:216.00px;top:54.00px;width:774.00px;height:18.50px;background:linear-gradient(#a9b8cd,#9badc4);border-top:0.6px solid #8e9db2"></div>
<div class="t" style="left:302.00px;width:600px;text-align:center;top:55.54px;font-size:5.6px;color:#3b3f45;font-weight:normal;">English Texts</div>
<div class="a" style="left:230.00px;top:61.80px;width:114.80px;height:11.20px;background:linear-gradient(#ebebeb,#e6e6e6);border-radius:3px 3px 0 0;box-shadow:0 -0.5px 0 #c9ced6"></div>
<div class="t" style="left:-17.80px;width:600px;text-align:center;top:65.00px;font-size:5.9px;color:#3a3a3a;font-weight:normal;letter-spacing:-0.6px">NRSVS</div>
<svg style="left:292.3px;top:64.7px" width="6" height="6"><circle cx="3" cy="3" r="2.6" fill="#f4f4f4" stroke="#b9b9b9" stroke-width="0.6"/><path d="M1.8 2.4h2.4L3 3.9z" fill="#666"/></svg>
<svg style="left:349.5px;top:65.2px" width="5" height="5"><path d="M2.5 0.3v4.4M0.3 2.5h4.4" stroke="#555" stroke-width="0.9"/></svg>
<div class="a" style="left:216.00px;top:72.50px;width:774.00px;height:16.50px;background:#e6e6e6"></div>
<div class="a" style="left:219.90px;top:76.40px;width:27.30px;height:8.80px;background:linear-gradient(#fefefe,#f1f1f1);border-radius:2px;box-shadow:0 0 0 0.6px #b3b3b3, 0 0.6px 0.6px rgba(0,0,0,0.15)"></div>
<div class="t" style="left:222.50px;top:78.16px;font-size:6.0px;color:#2b2b2b;font-weight:normal;letter-spacing:-0.65px">NRSVS</div>
<svg style="left:242.3px;top:79px" width="5" height="4"><path d="M0.2 0.3h4.2L2.3 3.3z" fill="#555"/></svg>
<div class="a" style="left:251.60px;top:75.40px;width:711.70px;height:9.80px;background:#fff;box-shadow:0 0 0 0.6px #c2c2c2, inset 0 0.7px 0.6px rgba(0,0,0,0.12)"></div>
<svg style="left:253px;top:76.6px" width="10" height="8"><circle cx="3.1" cy="3" r="2.3" fill="none" stroke="#444" stroke-width="1.1"/><line x1="4.7" y1="4.6" x2="6.4" y2="6.6" stroke="#444" stroke-width="1.3"/><path d="M7.2 3.3h2l-1 1.1z" fill="#555"/></svg>
<div class="a" style="left:263.80px;top:76.90px;width:26.40px;height:7.30px;background:#8db4da;border-radius:4px"></div>
<div class="t" style="left:-24.50px;width:600px;text-align:center;top:78.40px;font-size:5.0px;color:#d9e7f5;font-weight:normal;">VERSES</div>
<svg style="left:284.5px;top:79.6px" width="4" height="3"><path d="M0 0h3.4L1.7 2z" fill="#e9f1fa"/></svg>
<div class="t" style="left:291.60px;top:77.76px;font-size:6.0px;color:#9b9b9b;font-weight:normal;">Enter a word or phrase</div>
<svg style="left:965.5px;top:75.6px" width="9" height="9"><circle cx="4.2" cy="4.2" r="3.6" fill="#f6f6f6" stroke="#9d9d9d" stroke-width="0.6"/><path d="M4.2 2.2v4M2.2 4.2h4" stroke="#777" stroke-width="0.8"/></svg>
<svg style="left:976px;top:74.5px" width="11" height="10"><path d="M5.5 0.5L2 6.5h7z" fill="none" stroke="#8a8a8a" stroke-width="0.9"/><path d="M3.5 7.5h4M5.5 4v5M1 9h9" stroke="#8a8a8a" stroke-width="0.8"/></svg>
<div class="a" style="left:596.00px;top:87.20px;width:15.00px;height:0.60px;background:#bdbdbd"></div>
<div class="a" style="left:216.00px;top:89.00px;width:774.00px;height:13.50px;background:linear-gradient(#dedede,#d6d6d6);border-top:0.6px solid #cdcdcd"></div>
<div class="a" style="left:222.00px;top:95.20px;width:37.00px;height:1.00px;background:#9d9d9d"></div>
<div class="a" style="left:219.90px;top:92.00px;width:6.80px;height:7.40px;background:linear-gradient(#fbfbfb,#dcdcdc);border-radius:2px;box-shadow:0 0 0 0.6px #9a9a9a"></div>
<div class="t" style="left:-76.70px;width:600px;text-align:center;top:93.48px;font-size:5.5px;color:#444;font-weight:normal;">0</div>
<div class="t" style="left:262.80px;top:93.26px;font-size:6.23px;color:#2e2e2e;font-weight:normal;letter-spacing:-0.02px">Verse 12893 of 37415</div>
<div class="a" style="left:329.00px;top:92.60px;width:6.70px;height:6.60px;background:#fff;border-radius:1px;box-shadow:0 0 0 0.6px #a9a9a9"></div>
<div class="t" style="left:337.70px;top:93.27px;font-size:6.2px;color:#2e2e2e;font-weight:normal;">Compare</div>
<svg style="left:930.8px;top:91.8px" width="8" height="8"><rect x="0.6" y="0.6" width="6.6" height="6.6" fill="#bdbdbd" stroke="#666" stroke-width="1.1"/><rect x="1.6" y="3" width="3.4" height="3.4" fill="#e9e9e9" stroke="#666" stroke-width="0.7"/><path d="M2.8 3v-1.2h3.4v3.4h-1.2" stroke="#eee" stroke-width="0.6" fill="none"/></svg>
<div class="a" style="left:943.00px;top:91.70px;width:42.50px;height:9.30px;background:linear-gradient(#fefefe,#f0f0f0);border-radius:2px;box-shadow:0 0 0 0.6px #aaa, 0 0.6px 0.6px rgba(0,0,0,0.12)"></div>
<div class="t" style="left:945.20px;top:93.80px;font-size:5.9px;color:#2b2b2b;font-weight:normal;letter-spacing:-0.05px">Add Parallel</div>
<svg style="left:978.8px;top:94.9px" width="5" height="4"><path d="M0.2 0.3h4.2L2.3 3.3z" fill="#555"/></svg>
<div class="a" style="left:216.00px;top:102.50px;width:153.00px;height:15.00px;background:linear-gradient(#fdfdfd,#f3f3f3 60%,#e9e9e9);border-bottom:0.6px solid #dcdcdc"></div>
<div class="a" style="left:370.00px;top:102.50px;width:156.00px;height:15.00px;background:linear-gradient(#fdfdfd,#f3f3f3 60%,#e9e9e9);border-bottom:0.6px solid #dcdcdc"></div>
<div class="a" style="left:526.00px;top:102.50px;width:456.00px;height:15.00px;background:linear-gradient(#fdfdfd,#f3f3f3 60%,#e9e9e9);border-bottom:0.6px solid #dcdcdc"></div>
<div class="a" style="left:369.00px;top:102.50px;width:1.00px;height:446.00px;background:#e2e2e2"></div>
<div class="a" style="left:216.00px;top:117.50px;width:153.00px;height:431.00px;background:#fff"></div>
<div class="a" style="left:370.00px;top:117.50px;width:156.00px;height:431.00px;background:#fff"></div>
<div class="a" style="left:526.00px;top:117.50px;width:456.00px;height:431.00px;background:#fff"></div>
<div class="a" style="left:525.80px;top:102.80px;width:456.40px;height:445.80px;box-shadow:inset 0 0 0 1.6px #9cc3e6"></div>
<div class="a" style="left:982.20px;top:102.50px;width:7.80px;height:446.00px;background:#f7f7f7"></div>
<div class="a" style="left:984.00px;top:110.00px;width:4.00px;height:8.50px;background:#c1c1c1;border-radius:2px"></div>
<div class="a" style="left:222.00px;top:106.80px;width:7.00px;height:7.00px;background:linear-gradient(#e9e9e9,#d9d9d9);border-radius:1.3px;box-shadow:0 0 0 0.5px #c3c3c3"></div>
<svg style="left:223.8px;top:108.6px" width="4" height="4"><path d="M0.3 0.3L3.4 3.4M3.4 0.3L0.3 3.4" stroke="#777" stroke-width="0.9"/></svg>
<div class="a" style="left:375.00px;top:106.80px;width:7.00px;height:7.00px;background:linear-gradient(#e9e9e9,#d9d9d9);border-radius:1.3px;box-shadow:0 0 0 0.5px #c3c3c3"></div>
<svg style="left:376.8px;top:108.6px" width="4" height="4"><path d="M0.3 0.3L3.4 3.4M3.4 0.3L0.3 3.4" stroke="#777" stroke-width="0.9"/></svg>
<div class="a" style="left:531.50px;top:106.80px;width:7.00px;height:7.00px;background:linear-gradient(#e9e9e9,#d9d9d9);border-radius:1.3px;box-shadow:0 0 0 0.5px #c3c3c3"></div>
<svg style="left:533.3px;top:108.6px" width="4" height="4"><path d="M0.3 0.3L3.4 3.4M3.4 0.3L0.3 3.4" stroke="#777" stroke-width="0.9"/></svg>
<div class="t" style="left:279.80px;top:107.56px;font-size:6.0px;color:#333;font-weight:bold;letter-spacing:-0.65px">NRSVS</div>
<svg style="left:299.6px;top:109.6px" width="4" height="3"><path d="M0 0h3.2L1.6 2.2z" fill="#444"/></svg>
<div class="t" style="left:326.60px;top:107.07px;font-size:7.2px;color:#8e8e8e;font-family:'Liberation Serif'">A</div>
<div class="t" style="left:331.50px;top:105.06px;font-size:9.6px;color:#8e8e8e;font-family:'Liberation Serif'">A</div>
<svg style="left:343.7px;top:107.1px" width="9" height="7"><rect x="0.5" y="0.5" width="4.6" height="5.2" fill="#eee" stroke="#5f5f5f" stroke-width="1"/><path d="M2 0.8v4.6M3.5 0.8v4.6" stroke="#777" stroke-width="0.6"/><path d="M5.8 2.2h2.4L7 3.5z" fill="#666"/></svg>
<svg style="left:355.4px;top:107.3px" width="9" height="6"><circle cx="2.2" cy="3" r="1.55" fill="none" stroke="#5f5f5f" stroke-width="1.5"/><path d="M2.2 0.2v5.6M-0.6 3h5.6M0.2 1l4 4M4.2 1l-4 4" stroke="#5f5f5f" stroke-width="0.7"/><circle cx="2.2" cy="3" r="0.7" fill="#eee"/><path d="M5.4 2.4h2.4L6.6 3.7z" fill="#666"/></svg>
<div class="t" style="left:431.80px;top:107.56px;font-size:6.0px;color:#333;font-weight:bold;letter-spacing:-0.1px">HMT-W4</div>
<svg style="left:456.8px;top:109.6px" width="4" height="3"><path d="M0 0h3.2L1.6 2.2z" fill="#444"/></svg>
<div class="t" style="left:471.30px;top:107.07px;font-size:7.2px;color:#8e8e8e;font-family:'Liberation Serif'">A</div>
<div class="t" style="left:476.20px;top:105.06px;font-size:9.6px;color:#8e8e8e;font-family:'Liberation Serif'">A</div>
<svg style="left:487.7px;top:106.4px" width="10" height="7"><rect x="2.2" y="0.5" width="4" height="4" fill="none" stroke="#5f5f5f" stroke-width="1"/><rect x="0.6" y="2.2" width="4" height="4" fill="#fafafa" stroke="#5f5f5f" stroke-width="1.1"/><path d="M6.8 2.4h2.4L8 3.7z" fill="#666"/></svg>
<svg style="left:500.0px;top:107.1px" width="9" height="7"><rect x="0.5" y="0.5" width="4.6" height="5.2" fill="#eee" stroke="#5f5f5f" stroke-width="1"/><path d="M2 0.8v4.6M3.5 0.8v4.6" stroke="#777" stroke-width="0.6"/><path d="M5.8 2.2h2.4L7 3.5z" fill="#666"/></svg>
<svg style="left:511.8px;top:107.3px" width="9" height="6"><circle cx="2.2" cy="3" r="1.55" fill="none" stroke="#5f5f5f" stroke-width="1.5"/><path d="M2.2 0.2v5.6M-0.6 3h5.6M0.2 1l4 4M4.2 1l-4 4" stroke="#5f5f5f" stroke-width="0.7"/><circle cx="2.2" cy="3" r="0.7" fill="#eee"/><path d="M5.4 2.4h2.4L6.6 3.7z" fill="#666"/></svg>
<div class="t" style="left:719.70px;top:107.56px;font-size:6.0px;color:#333;font-weight:bold;letter-spacing:-0.32px">Anchor Bible Job-Song</div>
<svg style="left:782.8px;top:109.6px" width="4" height="3"><path d="M0 0h3.2L1.6 2.2z" fill="#444"/></svg>
<div class="t" style="left:951.30px;top:107.07px;font-size:7.2px;color:#8e8e8e;font-family:'Liberation Serif'">A</div>
<div class="t" style="left:956.20px;top:105.06px;font-size:9.6px;color:#8e8e8e;font-family:'Liberation Serif'">A</div>
<svg style="left:968.8px;top:107.3px" width="9" height="6"><circle cx="2.2" cy="3" r="1.55" fill="none" stroke="#5f5f5f" stroke-width="1.5"/><path d="M2.2 0.2v5.6M-0.6 3h5.6M0.2 1l4 4M4.2 1l-4 4" stroke="#5f5f5f" stroke-width="0.7"/><circle cx="2.2" cy="3" r="0.7" fill="#eee"/><path d="M5.4 2.4h2.4L6.6 3.7z" fill="#666"/></svg>
<style>
.nr{position:absolute;white-space:nowrap;font-size:10.3px;line-height:12px;color:#333}
.nt{font-size:10.38px}
.sc{font-size:0.78em}
.vn{color:#2a6ea8;font-weight:bold;font-size:9.2px;position:relative;top:-2.6px}
.vr{color:#2a6ea8;font-weight:bold;font-size:7.9px}
.lk{color:#3878b0;text-decoration:underline;text-decoration-color:#8fb6d9;text-underline-offset:1.3px;text-decoration-thickness:0.7px}
.b{font-weight:bold}
.tr{font-family:"Liberation Serif";font-style:italic;font-size:10.6px;font-weight:normal;color:#222;-webkit-text-stroke:0.25px #222}
.caret{display:inline-block;width:0.9px;height:10px;background:#444;vertical-align:-2px;margin-left:0.5px}
.hb{position:absolute;white-space:nowrap;font-family:"Liberation Serif";font-size:15.8px;line-height:16px;color:#111;direction:rtl;transform:scaleY(1.05);transform-origin:50% 60%;-webkit-text-stroke:0.15px #111}
.hvr{font-family:"Liberation Sans";color:#2a6ea8;font-weight:bold;font-size:7.9px}
.sp{font-family:"Liberation Sans";font-weight:bold;font-size:11px}
.hvn{font-family:"Liberation Sans";color:#2a6ea8;font-weight:bold;font-size:9.2px;position:relative;top:-3.5px}
</style>
<div class="a" style="left:216px;top:117.5px;width:153px;height:431px;overflow:hidden">
<div class="nr" style="left:8.60px;top:5.40px"><span class="vr">Job 2:1</span><span style="display:inline-block;width:9.6px"></span>One day the</div>
<div class="nr" style="left:8.60px;top:18.10px">heavenly beings came to</div>
<div class="nr" style="left:8.60px;top:30.80px">present themselves before</div>
<div class="nr" style="left:8.60px;top:43.50px">the L<span class="sc">ORD</span>, and Satan also</div>
<div class="nr" style="left:8.60px;top:56.20px">came among them to</div>
<div class="nr" style="left:8.60px;top:68.90px">present himself before the</div>
<div class="nr" style="left:8.60px;top:81.60px">L<span class="sc">ORD</span>. &nbsp;<span class="vn">2</span> The L<span class="sc">ORD</span> said to</div>
<div class="nr" style="left:8.60px;top:94.30px">Satan, “Where have you</div>
<div class="nr" style="left:8.60px;top:107.00px">come from?” Satan</div>
<div class="nr" style="left:8.60px;top:119.70px">answered the L<span class="sc">ORD</span>, “From</div>
<div class="nr" style="left:8.60px;top:132.40px">going to and fro on the</div>
<div class="nr" style="left:8.60px;top:145.10px">earth, and from walking up</div>
<div class="nr" style="left:8.60px;top:157.80px">and down on it.” &nbsp;<span class="vn">3</span> The L<span class="sc">ORD</span></div>
<div class="nr" style="left:8.60px;top:170.50px">said to Satan, “Have you</div>
<div class="nr" style="left:8.60px;top:183.20px">considered my servant Job?</div>
<div class="nr" style="left:8.60px;top:195.90px">There is no one like him on</div>
<div class="nr" style="left:8.60px;top:208.60px">the earth, a blameless and</div>
<div class="nr" style="left:8.60px;top:221.30px">upright man who fears God</div>
<div class="nr" style="left:8.60px;top:234.00px">and turns away from evil. He</div>
<div class="nr" style="left:8.60px;top:246.70px">still persists in his integrity,</div>
<div class="nr" style="left:8.60px;top:259.40px">although you incited me</div>
<div class="nr" style="left:8.60px;top:272.10px">against him, to destroy him</div>
<div class="nr" style="left:8.60px;top:284.80px">for no reason.” &nbsp;<span class="vn">4</span> Then</div>
<div class="nr" style="left:8.60px;top:297.50px">Satan answered the L<span class="sc">ORD</span>,</div>
<div class="nr" style="left:8.60px;top:310.20px">“Skin for skin! All that people</div>
<div class="nr" style="left:8.60px;top:322.90px">have they will give to save</div>
<div class="nr" style="left:8.60px;top:335.60px">their lives. &nbsp;<span class="vn">5</span> But stretch out</div>
<div class="nr" style="left:8.60px;top:348.30px">your hand now and touch</div>
<div class="nr" style="left:8.60px;top:361.00px">his bone and his flesh, and</div>
<div class="nr" style="left:8.60px;top:373.70px">he will curse you to your</div>
<div class="nr" style="left:8.60px;top:386.40px">face.” &nbsp;<span class="vn">6</span> The L<span class="sc">ORD</span> said to</div>
<div class="nr" style="left:8.60px;top:399.10px">Satan, “Very well, he is in</div>
<div class="nr" style="left:8.60px;top:411.80px">your power; only spare his</div>
<div class="nr" style="left:8.60px;top:424.50px">life.”</div>
</div>
<div class="a" style="left:370px;top:117.5px;width:156px;height:431px;overflow:hidden">
<div class="hb" style="right:43.80px;top:5.80px">וַיְהִי הַיּוֹם וַיָּבֹאוּ</div>
<div class="t" style="left:116.70px;top:9.60px;font-size:8.3px;font-weight:bold;color:#2a6ea8;letter-spacing:-0.15px">Job 2:1</div>
<div class="hb" style="right:10.80px;top:24.45px">בְּנֵי הָאֱלֹהִים לְהִתְיַצֵּב</div>
<div class="hb" style="right:10.80px;top:43.10px">עַל־יְהוָה וַיָּבוֹא</div>
<div class="hb" style="right:10.80px;top:61.75px">גַם־הַשָּׂטָן בְתֹכָם</div>
<div class="hb" style="right:10.80px;top:80.40px">לְהִתְיַצֵּב עַל־יְהוָה <span class="sp">:</span></div>
<div class="t" style="left:30.60px;top:84.00px;font-size:9.2px;font-weight:bold;color:#2a6ea8">2</div>
<div class="hb" style="right:10.80px;top:99.05px">וַיֹּאמֶר יְהוָה אֶל־הַשָּׂטָן</div>
<div class="hb" style="right:10.80px;top:117.70px">אֵי מִזֶּה תָּבֹא וַיַּעַן הַשָּׂטָן</div>
<div class="hb" style="right:10.80px;top:136.35px">אֶת־יְהוָה וַיֹּאמַר מִשֻּׁט</div>
<div class="hb" style="right:10.80px;top:155.00px">בָּאָרֶץ וּמֵהִתְהַלֵּךְ בָּהּ <span class="sp">:</span></div>
<div class="t" style="left:15.00px;top:158.60px;font-size:9.2px;font-weight:bold;color:#2a6ea8">3</div>
<div class="hb" style="right:10.80px;top:173.65px">וַיֹּאמֶר יְהוָה אֶל־הַשָּׂטָן</div>
<div class="hb" style="right:10.80px;top:192.30px">הֲשַׂמְתָּ לִבְּךָ אֶל־עַבְדִּי</div>
<div class="hb" style="right:10.80px;top:210.95px">אִיּוֹב כִּי אֵין כָּמֹהוּ</div>
<div class="hb" style="right:10.80px;top:229.60px">בָּאָרֶץ אִישׁ תָּם וְיָשָׁר</div>
<div class="hb" style="right:10.80px;top:248.25px">יְרֵא אֱלֹהִים וְסָר מֵרָע</div>
<div class="hb" style="right:10.80px;top:266.90px">וְעֹדֶנּוּ מַחֲזִיק בְּתֻמָּתוֹ</div>
<div class="hb" style="right:10.80px;top:285.55px">וַתְּסִיתֵנִי בוֹ לְבַלְּעוֹ</div>
<div class="hb" style="right:10.80px;top:304.20px">חִנָּם <span class="sp">:</span> <span class="hvn">4</span> וַיַּעַן הַשָּׂטָן</div>
<div class="hb" style="right:10.80px;top:322.85px">אֶת־יְהוָה וַיֹּאמַר עוֹר</div>
<div class="hb" style="right:10.80px;top:341.50px">בְּעַד־עוֹר וְכֹל אֲשֶׁר</div>
<div class="hb" style="right:10.80px;top:360.15px">לָאִישׁ יִתֵּן בְּעַד נַפְשׁוֹ <span class="sp">:</span></div>
<div class="t" style="left:15.10px;top:363.75px;font-size:9.2px;font-weight:bold;color:#2a6ea8">5</div>
<div class="hb" style="right:10.80px;top:378.80px">אוּלָם שְׁלַח־נָא יָדְךָ וְגַע</div>
<div class="hb" style="right:10.80px;top:397.45px">אֶל־עַצְמוֹ וְאֶל־בְּשָׂרוֹ</div>
<div class="hb" style="right:10.80px;top:416.10px">אִם־לֹא אֶל־פָּנֶיךָ</div>
</div>
<div class="a" style="left:526px;top:117.5px;width:456px;height:429.8px;overflow:hidden">
<div class="nr nt" style="left:29.70px;top:42.80px"><span class="lk b">2:1</span>.<span class="caret"></span> The repetition of <span class="tr">lĕhiṯyaṣṣēḇ ʿal-YHWH</span>, “to present oneself before Yahweh,” is omitted</div>
<div class="nr nt" style="left:8.00px;top:55.57px">by <span class="lk">LXX</span> and supplied from Aquila and Theodotion. It is difficult to judge whether it is a</div>
<div class="nr nt" style="left:8.00px;top:68.34px">dittograph from <span class="lk">1:6</span> or whether the omission was motivated by a concern to minimize the</div>
<div class="nr nt" style="left:8.00px;top:81.11px">Satan’s status in the divine council.</div>
<div class="nr nt" style="left:29.70px;top:93.88px"><span class="lk b">3</span>. <i>holds fast</i>. The verb means literally to grasp and hold firmly. One may hold fast to</div>
<div class="nr nt" style="left:8.00px;top:106.65px">deceit, <span class="lk">Jer 8:5</span>, or to anger, <span class="lk">Mic 7:18</span>. Job steadfastly maintains his integrity; cf. <span class="lk">27:6</span> where Job</div>
<div class="nr nt" style="left:8.00px;top:119.42px">holds fast to his claim of innocence.</div>
<div class="nr nt" style="left:29.70px;top:132.19px"><i>incited me</i>. This verb is generally used in a derogatory sense, as here and in <span class="lk">36:18</span>; cf.</div>
<div class="nr nt" style="left:8.00px;top:144.96px"><span class="lk">Deut 13:7</span>; <span class="lk">Josh 15:18</span>; <span class="lk">1 Sam 26:19</span>; <span class="lk">2 Sam 24:1</span>. But it may also have a favorable sense, as</div>
<div class="nr nt" style="left:8.00px;top:157.73px">in <span class="lk">36:16</span> and <span class="lk">2 Chron 18:31</span>. Yahweh here gives the Satan credit for instigating the experiment.</div>
<div class="nr nt" style="left:8.00px;top:183.27px"><span style="color:#3b7bb2">[Job, p. 20]</span></div>
<div class="nr nt" style="left:29.70px;top:208.81px"><i>destroy</i>. Literally “swallow.” The verb is often used in this sense; cf. <span class="lk">10:8</span>, <span class="lk">37:20</span>, and <span class="lk">2&nbsp;</span></div>
<div class="nr nt" style="left:8.00px;top:221.58px"><span class="lk">Sam 20:20</span>; <span class="lk">Isa 49:19</span>; <span class="lk">Hab 1:13</span>. In Sophocles’ <i>Philoctetes</i> the Chorus says:</div>
<div class="nr nt" style="left:29.70px;top:247.12px">But I know of no other, by hearsay, much less by sight, of all mankind whose destiny was</div>
<div class="nr nt" style="left:29.70px;top:259.89px">more his enemy when he met it than Philoctetes’, who wronged no one, nor killed but</div>
<div class="nr nt" style="left:29.70px;top:272.66px">lived, just among the just, and fell in trouble past his deserts.</div>
<div class="nr nt" style="left:8.00px;top:298.20px">(<i>The Complete Greek Tragedies</i>, eds. D. Grene and R. Lattimore, 1959, II, p. 427, lines</div>
<div class="nr nt" style="left:8.00px;top:310.97px">680–85.)</div>
<div class="nr nt" style="left:29.70px;top:323.74px"><span class="lk b">4</span>. <i>Skin after skin</i>. This is clearly a proverbial saying, but, like many such sayings, it is so</div>
<div class="nr nt" style="left:8.00px;top:336.51px">terse that it is difficult to interpret of itself. Happily the general sense is given by the following</div>
<div class="nr nt" style="left:8.00px;top:349.28px">line, “All that a man has, he will give for his life.” One explanation is that the saying derives from</div>
<div class="nr nt" style="left:8.00px;top:362.05px">barter, “a skin in exchange for a skin.” However, one does not usually barter a commodity for</div>
<div class="nr nt" style="left:8.00px;top:374.82px">another of the same kind. The sense of “value for value” would suit the context admirably. The</div>
<div class="nr nt" style="left:8.00px;top:387.59px">preposition <span class="tr" style="-webkit-text-stroke:0;color:#333">baʿaḏ</span> does not have the primary sense of “for,” “in exchange for,” but means “after,</div>
<div class="nr nt" style="left:8.00px;top:400.36px">beyond.” It is used in its separative sense with verbs meaning “to protect,” as in <span class="lk">1:10</span> above;</div>
<div class="nr nt" style="left:8.00px;top:413.13px">thus it developed the sense “on behalf of” with verbs “to pray,” “pay ransom,” and the like. The</div>
<div class="nr nt" style="left:8.00px;top:425.90px">Targum, Rashi, and others understood the expression to mean that one will put forth a less</div>
</div>
<div class="t" style="left:735px;top:127.8px;font-size:13.3px;font-weight:bold;color:#111;letter-spacing:-0.05px">N<span style="font-size:10.4px">OTES</span></div>
<div class="a" style="left:216.00px;top:547.30px;width:774.00px;height:15.70px;background:linear-gradient(#e3e3e3,#cfcfcf);border-top:0.6px solid #c6c6c6;border-bottom:1.4px solid #6a6a6a"></div>
<svg style="left:220.8px;top:551.7px" width="9" height="7"><path d="M0.2 6.3L4 0.4L7.8 6.3z" fill="#5b9fd8"/></svg>
<div class="t" style="left:232.00px;top:554.14px;font-size:4.9px;color:#333;font-weight:bold;">Vs</div>
<svg style="left:239.6px;top:551.7px" width="9" height="7"><path d="M0.2 0.4L4 6.3L7.8 0.4z" fill="#5b9fd8"/></svg>
<svg style="left:255.3px;top:551.7px" width="9" height="7"><path d="M0.2 6.3L4 0.4L7.8 6.3z" fill="#5b9fd8"/></svg>
<div class="t" style="left:266.50px;top:554.14px;font-size:4.9px;color:#333;font-weight:bold;">Ch</div>
<svg style="left:274.1px;top:551.7px" width="9" height="7"><path d="M0.2 0.4L4 6.3L7.8 0.4z" fill="#5b9fd8"/></svg>
<svg style="left:290.3px;top:551.7px" width="9" height="7"><path d="M0.2 6.3L4 0.4L7.8 6.3z" fill="#5b9fd8"/></svg>
<div class="t" style="left:301.50px;top:554.14px;font-size:4.9px;color:#333;font-weight:bold;">Bk</div>
<svg style="left:309.1px;top:551.7px" width="9" height="7"><path d="M0.2 0.4L4 6.3L7.8 0.4z" fill="#5b9fd8"/></svg>
<svg style="left:891.5px;top:551.6px" width="16" height="7"><path d="M4 0.3L0.3 3.3L4 6.3z" fill="#7fb0dd"/><path d="M10.2 0.3L13.9 3.3L10.2 6.3z" fill="#a8c8e6"/></svg>
<div class="a" style="left:912.60px;top:550.00px;width:58.40px;height:8.70px;background:#fff;box-shadow:0 0 0 0.5px #b5b5b5"></div>
<div class="t" style="left:914.00px;top:551.48px;font-size:6.4px;color:#222;font-weight:normal;letter-spacing:-0.1px">Job 2:1</div>
<div class="a" style="left:971.00px;top:550.00px;width:9.50px;height:8.70px;background:linear-gradient(#fafafa,#e6e6e6);box-shadow:0 0 0 0.5px #b5b5b5"></div>
<svg style="left:974px;top:553.2px" width="4" height="3"><path d="M0 0h3.4L1.7 2.4z" fill="#555"/></svg>
<div class="a" style="left:216.00px;top:563.00px;width:774.00px;height:57.50px;background:#ececec"></div>
<div class="a" style="left:216.00px;top:563.00px;width:21.00px;height:57.50px;background:linear-gradient(90deg,#ececec 70%,#e0e0e0)"></div>
<div class="t" style="left:220.30px;top:566.97px;font-size:7.2px;color:#8a8a8a;font-family:'Liberation Serif'">A</div>
<div class="t" style="left:225.20px;top:564.96px;font-size:9.6px;color:#8a8a8a;font-family:'Liberation Serif'">A</div>
<svg style="left:221px;top:575px" width="10" height="30"><rect x="1" y="1" width="6.5" height="6" fill="#f3f3f3" stroke="#777" stroke-width="0.9"/><path d="M2.6 3.3h3.4M2.6 5h3.4" stroke="#777" stroke-width="0.7"/><rect x="1.6" y="11.5" width="5.4" height="5.4" fill="#f0f0f0" stroke="#c8c8c8" stroke-width="0.8"/><rect x="1" y="22" width="6.5" height="3.6" fill="#f3f3f3" stroke="#777" stroke-width="0.8"/><path d="M2.5 21v-1.6h5.2" stroke="#777" stroke-width="0.8" fill="none"/><path d="M1.3 26.4h3" stroke="#777" stroke-width="0.8"/></svg>
<svg style="left:983px;top:613px" width="7" height="7"><path d="M6.5 1L1 6.5M6.5 3.5L3.5 6.5" stroke="#aaa" stroke-width="0.7"/></svg>
</body></html>
